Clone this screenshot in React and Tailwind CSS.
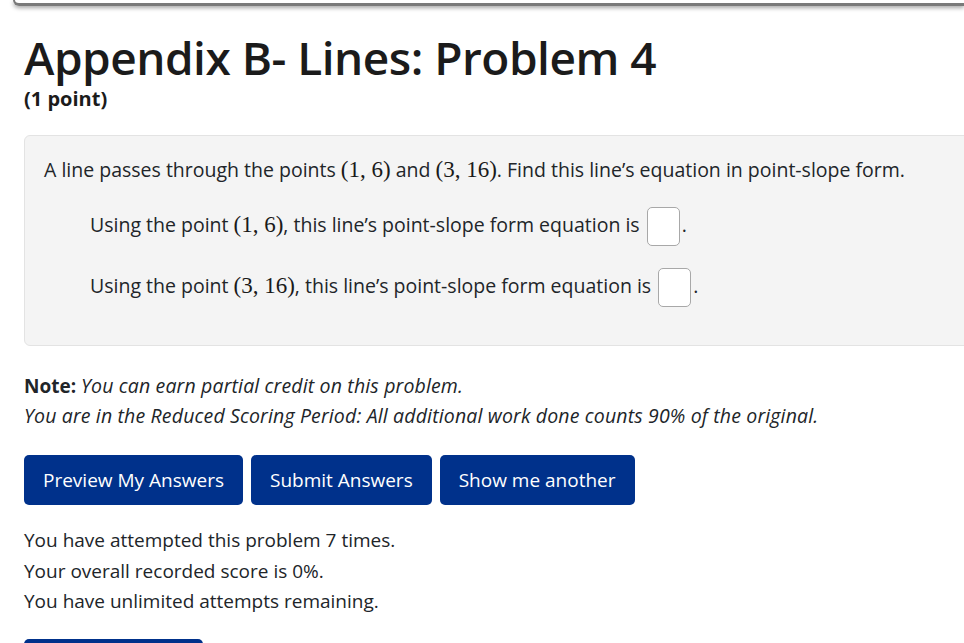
import React from 'react'

const sans = { fontFamily: '"Open Sans", "Noto Sans", sans-serif' }

function M({ children }) {
  // math set in a serif face, like the rendered TeX in the page
  return (
    <span className="font-['Liberation_Serif',serif] text-[23px] text-[#1a1a1a]">{children}</span>
  )
}

function AnswerBox() {
  return (
    <span className="mx-[2px] inline-block h-[39px] w-[33px] rounded-[5px] border border-[#a8a8a8] bg-white align-middle" />
  )
}

export default function App() {
  return (
    <div className="h-screen overflow-hidden bg-white text-[#212529]" style={sans}>
      <div className="ml-[13px] h-[6px] rounded-bl-md border-b-[3px] border-l-[2px] border-[#7a7a7a] shadow-[0_2px_4px_rgba(0,0,0,0.35)]" />

      <div className="pl-[24px]">
        <h1 className="mt-[21px] text-[46px] font-semibold leading-[60px] tracking-[-0.5px] text-[#1b1b1b]">
          Appendix B- Lines: Problem 4
        </h1>
        <div className="mt-[2px] text-[20px] font-bold leading-[20px] text-[#1b1b1b]">(1 point)</div>

        <div className="-mr-[30px] mt-[26px] rounded-md border border-[#e3e3e3] bg-[#f4f4f4] pb-[38px] pl-[19px] pr-4 pt-[20px] text-[19.5px] leading-[28px]">
          <p>
            A line passes through the points <M>(1, 6)</M> and <M>(3, 16)</M>. Find this line’s equation in
            point-slope form.
          </p>
          <p className="ml-[46px] mt-[23px]">
            Using the point <M>(1, 6)</M>, this line’s point-slope form equation is <AnswerBox />.
          </p>
          <p className="ml-[46px] mt-[22px]">
            Using the point <M>(3, 16)</M>, this line’s point-slope form equation is <AnswerBox />.
          </p>
        </div>

        <div className="mt-[25px] text-[19px] leading-[30px]">
          <div>
            <span className="font-bold">Note:</span>{' '}
            <i className="text-[19.5px] tracking-[0.15px]">You can earn partial credit on this problem.</i>
          </div>
          <div>
            <i className="text-[19.5px] tracking-[0.15px]">
              You are in the Reduced Scoring Period: All additional work done counts 90% of the original.
            </i>
          </div>
        </div>

        <div className="mt-[24px] flex gap-[8px]">
          {['Preview My Answers', 'Submit Answers', 'Show me another'].map((t) => (
            <button
              key={t}
              type="button"
              className="h-[50px] rounded-[5px] bg-[#00318b] px-[19px] text-[19px] text-white"
            >
              {t}
            </button>
          ))}
        </div>

        <div className="mt-[20px] text-[19px] leading-[30.5px]">
          <div>You have attempted this problem 7 times.</div>
          <div>Your overall recorded score is 0%.</div>
          <div>You have unlimited attempts remaining.</div>
        </div>

        <button
          type="button"
          className="mt-[22px] h-[50px] w-[179px] rounded-[5px] bg-[#00318b] text-[19px] text-white"
        >
          Email Instructor
        </button>
      </div>
    </div>
  )
}
